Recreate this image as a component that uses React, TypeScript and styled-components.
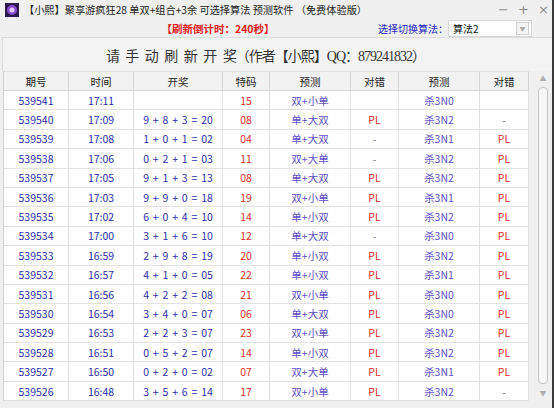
import React from "react";
import styled, { createGlobalStyle } from "styled-components";

const Global = createGlobalStyle`
  html, body { margin: 0; padding: 0; background: #f0f0f0; }
  body { width: 554px; height: 408px; overflow: hidden; font-family: "Noto Sans CJK SC", "Noto Sans", sans-serif; }
`;

const Window = styled.div`
  width: 554px;
  height: 408px;
  background: #f0f0f0;
  display: flex;
  flex-direction: column;
  box-sizing: border-box;
  border-right: 2px solid #3a3a3a;
`;

const TitleBar = styled.div`
  height: 19px;
  display: flex;
  align-items: center;
  padding-left: 5px;
  gap: 5px;
  font-size: 10.2px;
  color: #222;
  white-space: nowrap;
`;

const TitleText = styled.span`
  flex: 1;
`;

const WinButtons = styled.div`
  display: flex;
  gap: 10px;
  padding-right: 4px;
  color: #8a8a8a;
  font-size: 13px;
  font-family: "DejaVu Sans", sans-serif;
`;

const WinBtn = styled.span`
  width: 10px;
  text-align: center;
`;

const ControlRow = styled.div`
  height: 18px;
  display: flex;
  align-items: center;
  padding-left: 68px;
  white-space: nowrap;
`;

const Countdown = styled.div`
  width: 300px;
  text-align: center;
  color: #e0201c;
  font-weight: bold;
  font-size: 10.5px;
`;

const AlgoLabel = styled.span`
  color: #2525c0;
  font-size: 10px;
  margin-left: 10px;
  width: 70px;
`;

const Select = styled.div`
  width: 84px;
  height: 17px;
  background: #fff;
  border: 1px solid #d8d8d8;
  box-sizing: border-box;
  display: flex;
  align-items: center;
  justify-content: space-between;
  font-size: 10px;
  color: #111;
  padding-left: 4px;
`;

const SelectBtn = styled.div`
  width: 11px;
  height: 11px;
  border: 1px solid #d0d0d0;
  background: #f4f4f4;
  margin-right: 2px;
  display: flex;
  align-items: center;
  justify-content: center;
  color: #aaa;
  font-size: 6px;
`;

const Heading = styled.div`
  height: 34px;
  margin-left: 2px;
  border-top: 1px solid #dcdcdc;
  border-left: 1px solid #dcdcdc;
  background: #f3f3f3;
  display: flex;
  align-items: center;
  justify-content: center;
  box-sizing: border-box;
  font-family: "Liberation Serif", "Noto Sans CJK SC", serif;
  font-size: 14px;
  color: #333;
  padding-right: 24px;
  white-space: nowrap;
`;

const Spaced = styled.span<{ $gap: number }>`
  letter-spacing: ${(p) => p.$gap}px;
`;

const Body = styled.div`
  display: flex;
  align-items: flex-start;
  padding-left: 3px;
`;

const Table = styled.div`
  width: 525px;
  display: flex;
  flex-direction: column;
  background: #fff;
  border-left: 1px solid #d0d0d0;
`;

const cols = "65px 65px 89px 47px 81px 48px 81px 49px";

const HeaderRow = styled.div`
  display: grid;
  grid-template-columns: ${cols};
  height: 20px;
  background: #f2f2f2;
  border-top: 1px solid #e0e0e0;
  border-bottom: 1px solid #d6d6d6;
  box-sizing: border-box;
`;

const HeaderCell = styled.div`
  display: flex;
  align-items: center;
  justify-content: center;
  font-size: 10.5px;
  color: #222;
  border-right: 1px solid #d6d6d6;
`;

const Row = styled.div`
  display: grid;
  grid-template-columns: ${cols};
  height: 19.4px;
  border-bottom: 1px solid #e2e2e2;
  box-sizing: border-box;
`;

type Tone = "blue" | "red" | "purple" | "gray";
const toneColor: Record<Tone, string> = {
  blue: "#2f2fa8",
  red: "#e0302a",
  purple: "#5f50c6",
  gray: "#777",
};

const Cell = styled.div<{ $tone: Tone }>`
  display: flex;
  align-items: center;
  justify-content: center;
  font-size: 10.5px;
  color: ${(p) => toneColor[p.$tone]};
  border-right: 1px solid #e2e2e2;
  white-space: pre;
  word-spacing: 1.5px;
`;

const Scrollbar = styled.div`
  margin-left: 6px;
  width: 16px;
  height: 329px;
  display: flex;
  flex-direction: column;
  align-items: center;
  background: #f0f0f0;
`;

const Arrow = styled.div`
  height: 14px;
  color: #b0b0b0;
  font-size: 7px;
  display: flex;
  align-items: center;
`;

const Thumb = styled.div`
  width: 8px;
  flex: 1;
  margin: 2px 0;
  border: 1px solid #c6c6c6;
  border-radius: 4px;
  background: #f7f7f7;
`;

const Icon = () => (
  <svg width="14" height="14" viewBox="0 0 14 14">
    <rect width="14" height="14" fill="#2a1a4a" />
    <circle cx="7" cy="7" r="5" fill="#8a4ad0" />
    <circle cx="7" cy="7" r="2.5" fill="#e6c8ff" />
  </svg>
);

type R = [string, string, string, string, string, string, string, string];
const rows: R[] = [
  ["539541", "17:11", "", "15", "双+小单", "", "杀3N0", ""],
  ["539540", "17:09", "9 + 8 + 3 = 20", "08", "单+大双", "PL", "杀3N2", "-"],
  ["539539", "17:08", "1 + 0 + 1 = 02", "04", "单+大双", "-", "杀3N1", "PL"],
  ["539538", "17:06", "0 + 2 + 1 = 03", "11", "双+大单", "-", "杀3N2", "PL"],
  ["539537", "17:05", "9 + 1 + 3 = 13", "08", "单+大双", "PL", "杀3N2", "PL"],
  ["539536", "17:03", "9 + 9 + 0 = 18", "19", "双+小单", "PL", "杀3N1", "PL"],
  ["539535", "17:02", "6 + 0 + 4 = 10", "14", "单+小双", "PL", "杀3N2", "PL"],
  ["539534", "17:00", "3 + 1 + 6 = 10", "12", "单+大双", "-", "杀3N0", "PL"],
  ["539533", "16:59", "2 + 9 + 8 = 19", "20", "单+小双", "PL", "杀3N2", "PL"],
  ["539532", "16:57", "4 + 1 + 0 = 05", "22", "单+小双", "PL", "杀3N1", "PL"],
  ["539531", "16:56", "4 + 2 + 2 = 08", "21", "双+小单", "PL", "杀3N0", "PL"],
  ["539530", "16:54", "3 + 4 + 0 = 07", "06", "单+大双", "PL", "杀3N0", "PL"],
  ["539529", "16:53", "2 + 2 + 3 = 07", "23", "双+小单", "PL", "杀3N2", "PL"],
  ["539528", "16:51", "0 + 5 + 2 = 07", "14", "单+小双", "PL", "杀3N2", "PL"],
  ["539527", "16:50", "0 + 2 + 0 = 02", "07", "双+大单", "PL", "杀3N1", "PL"],
  ["539526", "16:48", "3 + 5 + 6 = 14", "17", "双+小单", "PL", "杀3N2", "-"],
];

const headers = ["期号", "时间", "开奖", "特码", "预测", "对错", "预测", "对错"];

const markTone = (v: string): Tone => (v === "PL" ? "red" : "gray");

export default function App() {
  return (
    <>
      <Global />
      <Window>
        <TitleBar>
          <Icon />
          <TitleText>【小熙】聚享游疯狂28 单双+组合+3余 可选择算法 预测软件 （免费体验版）</TitleText>
          <WinButtons>
            <WinBtn>−</WinBtn>
            <WinBtn>+</WinBtn>
            <WinBtn>×</WinBtn>
          </WinButtons>
        </TitleBar>
        <ControlRow>
          <Countdown>【刷新倒计时：240秒】</Countdown>
          <AlgoLabel>选择切换算法：</AlgoLabel>
          <Select>
            算法2
            <SelectBtn>▼</SelectBtn>
          </Select>
        </ControlRow>
        <Heading>
          <Spaced $gap={5.5}>请手动刷新开</Spaced>
          <Spaced $gap={-1}>奖（作者【小熙】QQ：879241832）</Spaced>
        </Heading>
        <Body>
          <Table>
            <HeaderRow>
              {headers.map((h, i) => (
                <HeaderCell key={i}>{h}</HeaderCell>
              ))}
            </HeaderRow>
            {rows.map((r) => (
              <Row key={r[0]}>
                <Cell $tone="blue">{r[0]}</Cell>
                <Cell $tone="blue">{r[1]}</Cell>
                <Cell $tone="blue">{r[2]}</Cell>
                <Cell $tone="red">{r[3]}</Cell>
                <Cell $tone="purple">{r[4]}</Cell>
                <Cell $tone={markTone(r[5])}>{r[5]}</Cell>
                <Cell $tone="purple">{r[6]}</Cell>
                <Cell $tone={markTone(r[7])}>{r[7]}</Cell>
              </Row>
            ))}
          </Table>
          <Scrollbar>
            <Arrow>▲</Arrow>
            <Thumb />
            <Arrow>▼</Arrow>
          </Scrollbar>
        </Body>
      </Window>
    </>
  );
}
